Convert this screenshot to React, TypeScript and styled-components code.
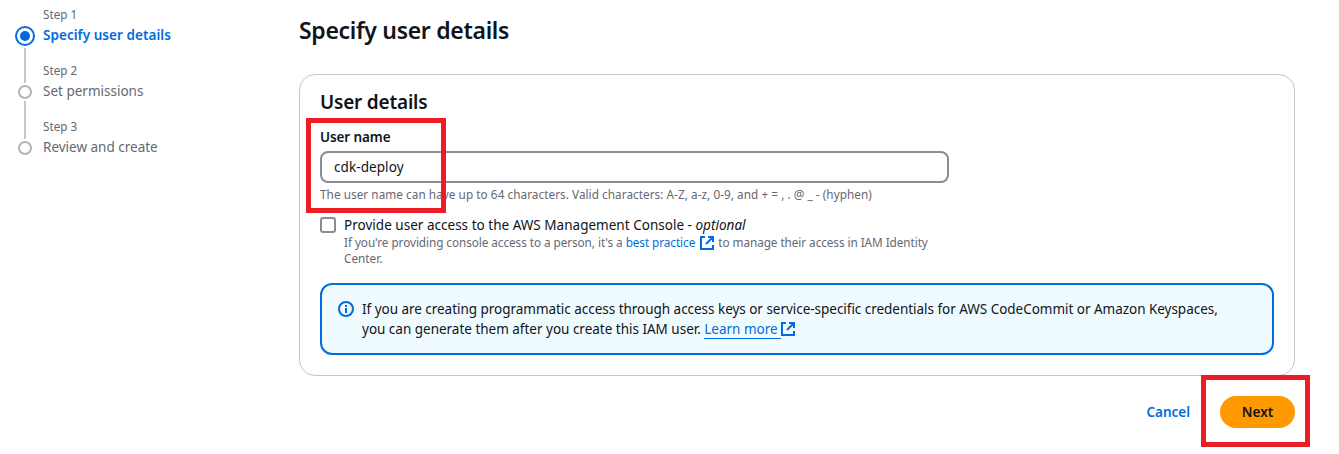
import React from "react";
import styled, { createGlobalStyle, css } from "styled-components";

const color = {
  text: "#0f141a",
  muted: "#656871",
  link: "#006ce0",
  line: "#c6c6cd",
  control: "#8c8c94",
  callout: "#ed1c24",
};

const GlobalStyle = createGlobalStyle`
  * { box-sizing: border-box; }
  body {
    margin: 0;
    background: #fff;
    color: ${color.text};
    font-family: "Noto Sans", "Open Sans", sans-serif;
    font-size: 13.5px;
    line-height: 20px;
    overflow: hidden;
  }
`;

const Page = styled.div`
  display: flex;
  width: 1339px;
  height: 454px;
`;

const Steps = styled.ol`
  width: 299px;
  margin: 0;
  padding: 6px 0 0 15px;
  list-style: none;
`;

const Step = styled.li`
  display: flex;
  gap: 8px;
  height: 56px;
`;

const Rail = styled.div<{ $first?: boolean }>`
  display: flex;
  flex-direction: column;
  align-items: center;
  width: 20px;
  padding-top: ${(p) => (p.$first ? 20 : 0)}px;
`;

const Connector = styled.span<{ $size: number }>`
  flex: none;
  width: 2px;
  height: ${(p) => p.$size}px;
  background: ${color.line};
`;

const Marker = styled.span<{ $active?: boolean }>`
  flex: none;
  display: grid;
  place-items: center;
  border-radius: 50%;
  ${(p) =>
    p.$active
      ? css`
          width: 20px;
          height: 20px;
          margin-bottom: 2px;
          border: 2px solid ${color.link};
          &::after {
            content: "";
            width: 10px;
            height: 10px;
            border-radius: 50%;
            background: ${color.link};
          }
        `
      : css`
          width: 14px;
          height: 14px;
          margin: 2px 0;
          border: 2px solid #b4b4bb;
        `}
`;

const StepText = styled.div`
  display: flex;
  flex-direction: column;
  white-space: nowrap;
`;

const StepLabel = styled.span`
  height: 19px;
  color: ${color.muted};
  font-size: 11.75px;
  line-height: 16px;
`;

const StepName = styled.span<{ $active?: boolean }>`
  color: ${(p) => (p.$active ? color.link : color.muted)};
  font-weight: ${(p) => (p.$active ? 600 : 400)};
  letter-spacing: ${(p) => (p.$active ? 0.05 : 0)}px;
`;

const Main = styled.main`
  display: flex;
  flex-direction: column;
  width: 996px;
  padding-top: 15px;
`;

const PageTitle = styled.h1`
  height: 59px;
  margin: 0;
  font-size: 23px;
  line-height: 30px;
  font-weight: 600;
  letter-spacing: -0.3px;
`;

const Card = styled.section`
  height: 302px;
  padding: 15px 20px 0;
  border: 1px solid ${color.line};
  border-radius: 16px;
`;

const CardTitle = styled.h2`
  height: 37px;
  margin: 0;
  font-size: 19px;
  line-height: 24px;
  font-weight: 600;
  letter-spacing: -0.2px;
`;

const Field = styled.div`
  position: relative;
  width: 629px;
  height: 90px;
`;

const FieldLabel = styled.label`
  display: block;
  height: 24px;
  font-weight: 600;
  letter-spacing: -0.1px;
`;

const TextInput = styled.input`
  display: block;
  width: 100%;
  height: 32px;
  padding: 0 12px;
  border: 2px solid ${color.control};
  border-radius: 8px;
  outline: none;
  background: #fff;
  color: ${color.text};
  font: inherit;
  letter-spacing: 0.08px;
`;

const Hint = styled.p<{ $spacing?: number }>`
  margin: 0;
  color: ${color.muted};
  font-size: 11.75px;
  line-height: 16px;
  letter-spacing: ${(p) => p.$spacing ?? 0}px;
  white-space: nowrap;
`;

const FieldHint = styled(Hint)`
  margin-top: 3px;
`;

const Callout = styled.span<{ $inset: string }>`
  position: absolute;
  inset: ${(p) => p.$inset};
  border: 5px solid ${color.callout};
  pointer-events: none;
`;

const Option = styled.div`
  display: flex;
  gap: 8px;
  height: 66px;
`;

const Checkbox = styled.input`
  appearance: none;
  flex: none;
  width: 16px;
  height: 16px;
  margin: 0;
  border: 2px solid ${color.control};
  border-radius: 3px;
  background: #fff;
`;

const OptionText = styled.div`
  margin-top: -2px;
`;

const OptionLabel = styled.label`
  display: block;
  height: 19px;
  white-space: nowrap;
  letter-spacing: 0.02px;
`;

const Link = styled.a<{ $underlined?: boolean }>`
  color: ${color.link};
  text-decoration: none;
  ${(p) =>
    p.$underlined &&
    css`
      padding: 0 3px 0 0;
      border-bottom: 1px solid ${color.link};
    `}
`;

const LinkIcon = styled.svg<{ $gap: string; $drop: number }>`
  width: 14px;
  height: 14px;
  margin: ${(p) => p.$gap};
  vertical-align: ${(p) => p.$drop}px;
`;

const Alert = styled.div`
  display: flex;
  gap: 8px;
  height: 72px;
  padding: 14px 16px;
  border: 2px solid ${color.link};
  border-radius: 12px;
  background: #f0fbff;
`;

const InfoIcon = styled.svg`
  flex: none;
  width: 16px;
  height: 16px;
  margin-top: 2px;
`;

const AlertLine = styled.div<{ $spacing: number }>`
  letter-spacing: ${(p) => p.$spacing}px;
  white-space: nowrap;
`;

const Actions = styled.div`
  display: flex;
  justify-content: flex-end;
  align-items: center;
  gap: 30px;
  margin-top: 20px;
`;

const TextButton = styled.button`
  padding: 0;
  border: 0;
  background: none;
  color: ${color.link};
  font: inherit;
  font-weight: 600;
`;

const Highlighted = styled.div`
  position: relative;
`;

const PrimaryButton = styled.button`
  display: block;
  width: 75px;
  height: 32px;
  padding: 0;
  border: 0;
  border-radius: 16px;
  background: #ff9900;
  color: ${color.text};
  font: inherit;
  font-weight: 600;
`;

function ExternalIcon({ gap, drop }: { gap: string; drop: number }) {
  return (
    <LinkIcon $gap={gap} $drop={drop} viewBox="0 0 14 14" fill="none" stroke={color.link} strokeWidth="2">
      <path d="M5 1H1v12h12V9M8 1h5v5M13 1 6 8" />
    </LinkIcon>
  );
}

export default function App() {
  return (
    <>
      <GlobalStyle />
      <Page>
        <Steps>
          <Step>
            <Rail $first>
              <Marker $active />
              <Connector $size={14} />
            </Rail>
            <StepText>
              <StepLabel>Step 1</StepLabel>
              <StepName $active>Specify user details</StepName>
            </StepText>
          </Step>
          <Step>
            <Rail>
              <Connector $size={21} />
              <Marker />
              <Connector $size={17} />
            </Rail>
            <StepText>
              <StepLabel>Step 2</StepLabel>
              <StepName>Set permissions</StepName>
            </StepText>
          </Step>
          <Step>
            <Rail>
              <Connector $size={21} />
              <Marker />
            </Rail>
            <StepText>
              <StepLabel>Step 3</StepLabel>
              <StepName>Review and create</StepName>
            </StepText>
          </Step>
        </Steps>
        <Main>
          <PageTitle>Specify user details</PageTitle>
          <Card>
            <CardTitle>User details</CardTitle>
            <Field>
              <FieldLabel htmlFor="user-name">User name</FieldLabel>
              <TextInput id="user-name" defaultValue="cdk-deploy" spellCheck={false} />
              <FieldHint $spacing={0.05}>
                The user name can have up to 64 characters. Valid characters: A-Z, a-z, 0-9, and + = , . @ _ - (hyphen)
              </FieldHint>
              <Callout $inset="-9px 503px 4px -14px" />
            </Field>
            <Option>
              <Checkbox type="checkbox" id="console-access" />
              <OptionText>
                <OptionLabel htmlFor="console-access">
                  Provide user access to the AWS Management Console - <em>optional</em>
                </OptionLabel>
                <Hint $spacing={-0.06}>
                  If you're providing console access to a person, it's a <Link>best practice</Link>
                  <ExternalIcon gap="0 4px 0 5px" drop={-3} />
                  to manage their access in IAM Identity
                </Hint>
                <Hint>Center.</Hint>
              </OptionText>
            </Option>
            <Alert>
              <InfoIcon viewBox="0 0 16 16" fill="none" stroke={color.link} strokeWidth="2">
                <circle cx="8" cy="8" r="7" />
                <path d="M8 12V7M8 6V4" />
              </InfoIcon>
              <div>
                <AlertLine $spacing={-0.03}>
                  If you are creating programmatic access through access keys or service-specific credentials for AWS
                  CodeCommit or Amazon Keyspaces,
                </AlertLine>
                <AlertLine $spacing={-0.01}>
                  you can generate them after you create this IAM user. <Link $underlined>Learn more</Link>
                  <ExternalIcon gap="0" drop={-2} />
                </AlertLine>
              </div>
            </Alert>
          </Card>
          <Actions>
            <TextButton>Cancel</TextButton>
            <Highlighted>
              <PrimaryButton>Next</PrimaryButton>
              <Callout $inset="-21px -15px -19px -19px" />
            </Highlighted>
          </Actions>
        </Main>
      </Page>
    </>
  );
}
